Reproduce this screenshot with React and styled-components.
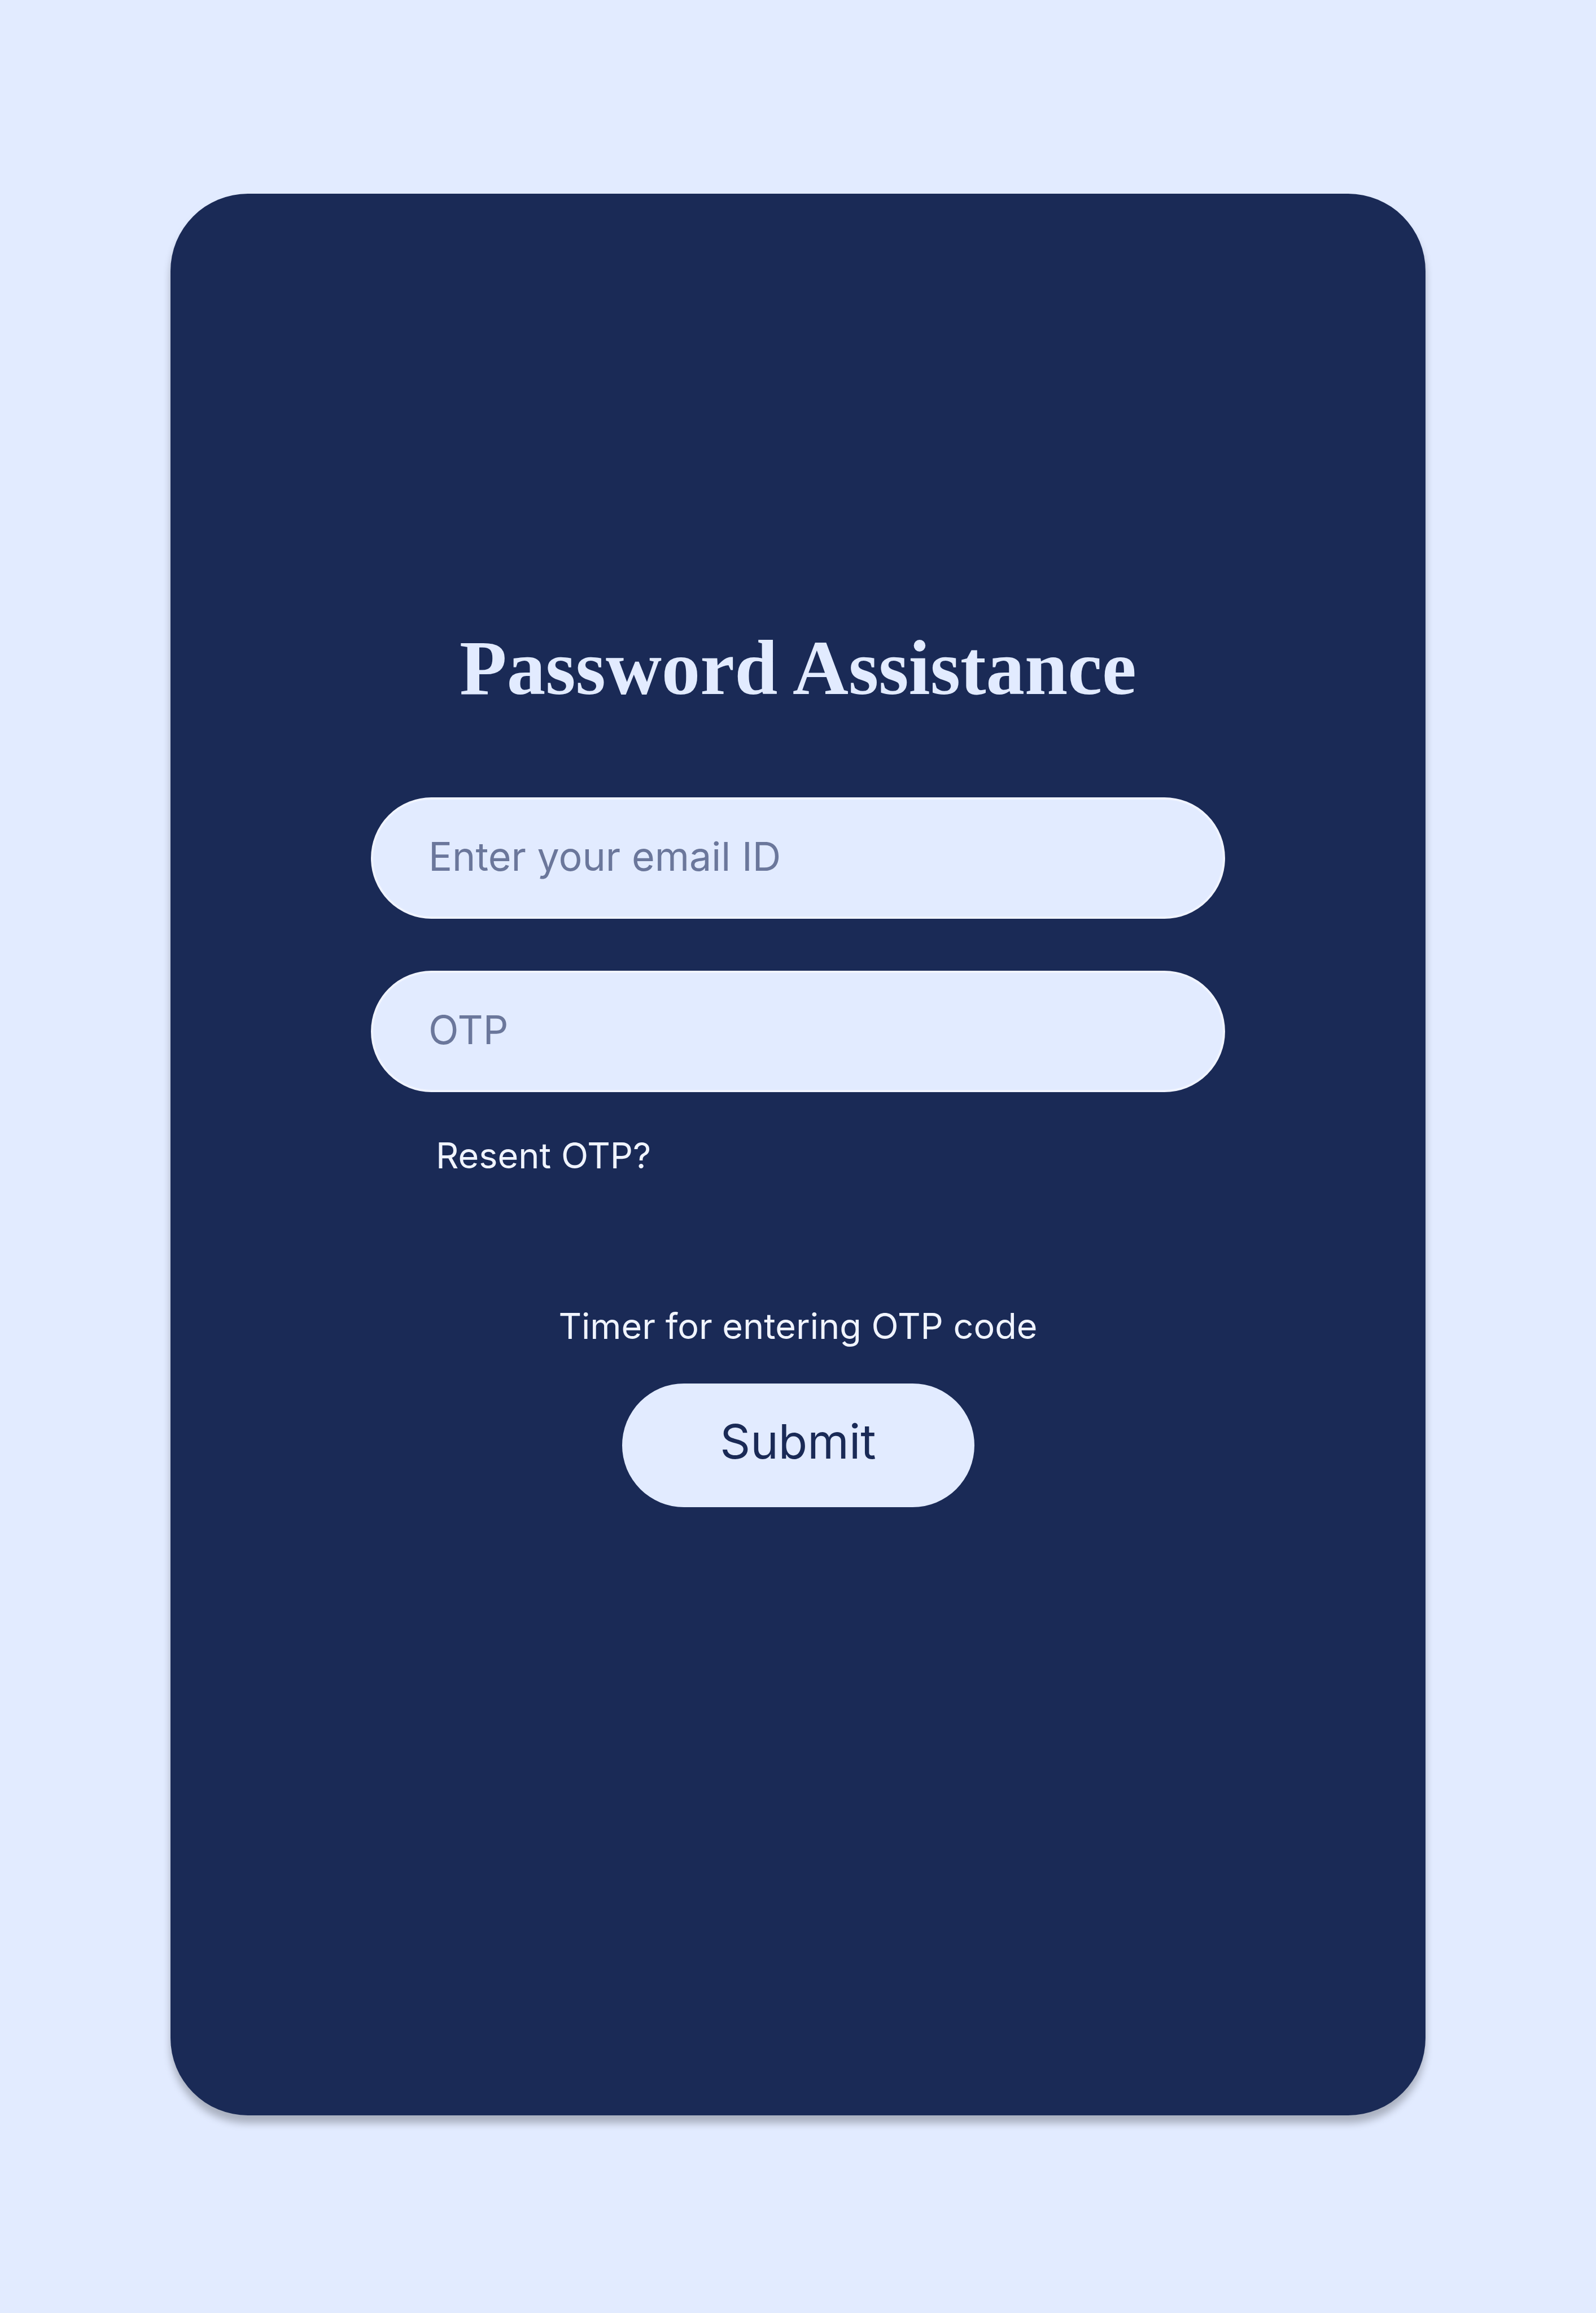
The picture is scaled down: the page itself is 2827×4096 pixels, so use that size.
import React from 'react';
import styled, { createGlobalStyle } from 'styled-components';

const color = {
  sky: '#e2ebff',
  navy: '#1a2a56',
  frost: '#f0f4ff',
  hint: '#6b779b',
};

const sans = '"Inter", "Open Sans", sans-serif';

const GlobalStyle = createGlobalStyle`
  *, *::before, *::after { box-sizing: border-box; }
  body { margin: 0; background: ${color.sky}; }
`;

const Page = styled.main`
  display: flex;
  min-height: 100vh;
  padding: 343px 302px 350px;
  background: ${color.sky};
`;

const Card = styled.section`
  flex: 1;
  display: flex;
  flex-direction: column;
  padding: 764px 355px 355px;
  border-radius: 137px;
  background: ${color.navy};
  box-shadow: 0 14px 14px rgba(0, 0, 0, 0.25);
`;

const Title = styled.h1`
  margin: 0 0 153px;
  color: ${color.sky};
  font: 700 137px/152px "Liberation Serif", "Times New Roman", serif;
  text-align: center;
`;

const Form = styled.form`
  display: flex;
  flex-direction: column;
  align-items: center;
`;

const Fields = styled.div`
  display: grid;
  gap: 92px;
  width: 100%;
`;

const Field = styled.input`
  width: 100%;
  height: 215px;
  padding: 0 98px 6px;
  border: 4px solid ${color.frost};
  border-radius: 108px;
  outline: none;
  background: ${color.sky};
  color: ${color.navy};
  font: 400 70px ${sans};

  &::placeholder {
    color: ${color.hint};
    opacity: 1;
  }
`;

const ResendLink = styled.a`
  align-self: flex-start;
  margin: 74px 115px 226px;
  color: ${color.frost};
  font: 400 63px/76px ${sans};
  text-decoration: none;
`;

const TimerNote = styled.p`
  margin: 0 0 64px;
  color: ${color.frost};
  font: 400 63px/76px ${sans};
`;

const SubmitButton = styled.button`
  width: 624px;
  height: 219px;
  padding: 0 0 14px;
  border: 0;
  border-radius: 110px;
  background: ${color.sky};
  color: ${color.navy};
  font: 400 84px ${sans};
  cursor: pointer;
`;

export default function App() {
  return (
    <>
      <GlobalStyle />
      <Page>
        <Card>
          <Title>Password Assistance</Title>
          <Form onSubmit={(event) => event.preventDefault()}>
            <Fields>
              <Field
                type="email"
                name="email"
                aria-label="Enter your email ID"
                placeholder="Enter your email ID"
              />
              <Field
                type="text"
                name="otp"
                inputMode="numeric"
                aria-label="OTP"
                placeholder="OTP"
              />
            </Fields>
            <ResendLink href="#resend">Resent OTP?</ResendLink>
            <TimerNote>Timer for entering OTP code</TimerNote>
            <SubmitButton type="submit">Submit</SubmitButton>
          </Form>
        </Card>
      </Page>
    </>
  );
}
